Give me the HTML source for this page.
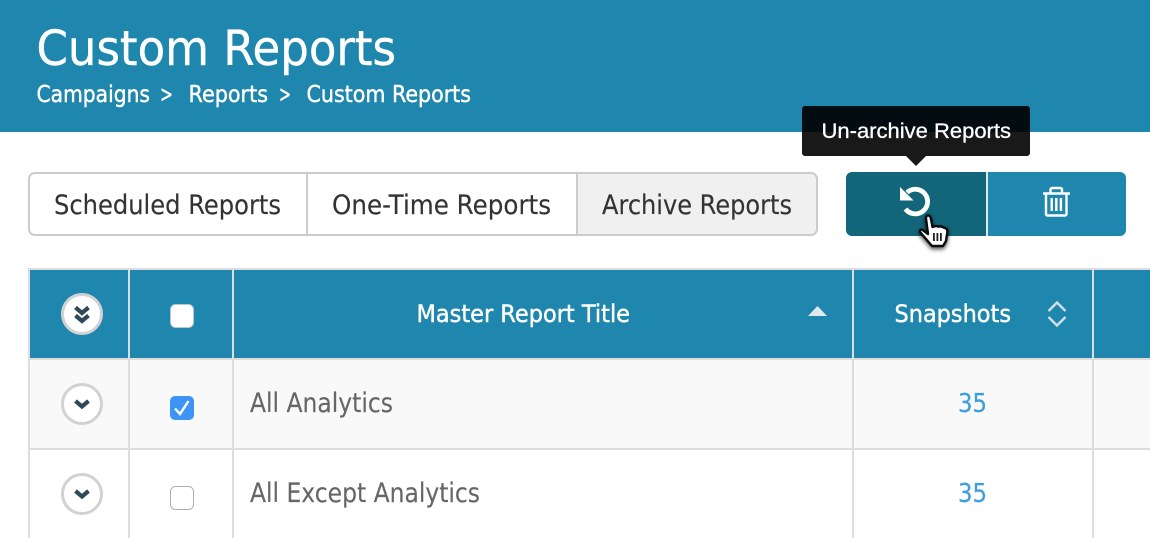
<!DOCTYPE html>
<html><head><meta charset="utf-8"><title>Custom Reports</title>
<style>
html,body{margin:0;padding:0;background:#fff;width:1150px;height:538px;overflow:hidden}
svg{display:block}
text{font-family:"DejaVu Sans","Liberation Sans",sans-serif}
</style></head><body>
<svg width="1150" height="538" viewBox="0 0 1150 538" xmlns="http://www.w3.org/2000/svg">
<defs>
<g id="chev"><path d="M-6.500 -3 L0 2.500 L6.500 -3" fill="none" stroke="#2f4a56" stroke-width="4.200"/></g>
</defs>
<rect width="1150" height="538" fill="#fff"/>
<rect width="1150" height="132" fill="#1f87ae"/>
<text x="36.500" y="65" font-size="48" fill="#fff" stroke="#fff" stroke-width=".4" textLength="359.500" lengthAdjust="spacingAndGlyphs">Custom Reports</text>
<g font-size="23" fill="#fff" stroke="#fff" stroke-width=".45">
<text x="36.500" y="102" textLength="113.500" lengthAdjust="spacingAndGlyphs">Campaigns</text>
<text x="160" y="102" textLength="13" lengthAdjust="spacingAndGlyphs">&gt;</text>
<text x="188.500" y="102" textLength="79.500" lengthAdjust="spacingAndGlyphs">Reports</text>
<text x="279" y="102" textLength="12" lengthAdjust="spacingAndGlyphs">&gt;</text>
<text x="306.500" y="102" textLength="164.500" lengthAdjust="spacingAndGlyphs">Custom Reports</text>
</g>

<!-- tabs -->
<path d="M577 173H811a6 6 0 0 1 6 6V229a6 6 0 0 1 -6 6H577Z" fill="#f0f0f0"/>
<rect x="29" y="173" width="788" height="62" rx="6" fill="none" stroke="#cccccc" stroke-width="2"/>
<rect x="306" y="173" width="2" height="62" fill="#cccccc"/>
<rect x="576" y="173" width="2" height="62" fill="#cccccc"/>
<g font-size="27" fill="#333" stroke="#333" stroke-width=".15">
<text x="54" y="214" textLength="227" lengthAdjust="spacingAndGlyphs">Scheduled Reports</text>
<text x="332" y="214" textLength="219" lengthAdjust="spacingAndGlyphs">One-Time Reports</text>
<text x="602" y="214" textLength="190" lengthAdjust="spacingAndGlyphs">Archive Reports</text>
</g>

<!-- action buttons -->
<path d="M986 172V236H852a6 6 0 0 1 -6 -6V178a6 6 0 0 1 6 -6Z" fill="#13667a"/>
<rect x="986" y="172" width="2" height="64" fill="#dbe7ec"/>
<path d="M988 172H1120a6 6 0 0 1 6 6V230a6 6 0 0 1 -6 6H988Z" fill="#1f87ae"/>

<!-- undo icon -->
<path d="M907 192.500 A12.300 12.300 0 1 1 905.500 209" fill="none" stroke="#fff" stroke-width="4.800"/>
<path d="M900 187 V200.500 H913.500 Z" fill="#fff"/>

<!-- trash icon -->
<g fill="none" stroke="#fff" stroke-width="2.400">
<path d="M1043 193.500H1070"/>
<path d="M1046 193.500V214a1.500 1.500 0 0 0 1.500 1.500H1065a1.500 1.500 0 0 0 1.500 -1.500V193.500"/>
<path d="M1050.500 193.500V189.500a1.500 1.500 0 0 1 1.500 -1.500H1060.500a1.500 1.500 0 0 1 1.500 1.500V193.500"/>
</g>
<g fill="#fff"><rect x="1050.500" y="198" width="2.400" height="13"/><rect x="1055.100" y="198" width="2.400" height="13"/><rect x="1059.700" y="198" width="2.400" height="13"/></g>

<!-- cursor -->
<path d="M926 218.500 Q926 215 928.500 215.500 Q930.500 216 931 219 L932.500 227 Q936 225.500 938 226.500 Q942 226 943.500 227.500 Q947 228 947.500 231 L946 241 L943 246 H932 L926 239 L920 232 Q919.500 229.500 922 229.500 L928 234 Z" fill="#fff" stroke="#0b0b0b" stroke-width="2.400" stroke-linejoin="round" style="filter:drop-shadow(0 2px 2px rgba(0,0,0,.7))"/>
<g fill="#222"><rect x="933" y="233" width="1.800" height="8"/><rect x="936.500" y="233" width="1.800" height="8"/><rect x="940" y="233" width="1.800" height="8"/></g>

<!-- tooltip -->
<path d="M805 106H1027a3 3 0 0 1 3 3V153a3 3 0 0 1 -3 3H926L916 166L906 156H805a3 3 0 0 1 -3 -3V109a3 3 0 0 1 3 -3Z" fill="#000" fill-opacity=".9"/>
<text x="821.500" y="138" font-size="21" fill="#fff" stroke="#fff" stroke-width=".3" style="font-family:'Liberation Sans',sans-serif" textLength="189.500" lengthAdjust="spacingAndGlyphs">Un-archive Reports</text>

<!-- table -->
<rect x="28" y="268" width="1122" height="270" fill="#ddd"/>
<rect x="30" y="270" width="98" height="88" fill="#1f87ae"/>
<rect x="130" y="270" width="102" height="88" fill="#1f87ae"/>
<rect x="234" y="270" width="618" height="88" fill="#1f87ae"/>
<rect x="854" y="270" width="238" height="88" fill="#1f87ae"/>
<rect x="1094" y="270" width="56" height="88" fill="#1f87ae"/>
<g fill="#f9f9f9">
<rect x="30" y="360" width="98" height="88"/><rect x="130" y="360" width="102" height="88"/><rect x="234" y="360" width="618" height="88"/><rect x="854" y="360" width="238" height="88"/><rect x="1094" y="360" width="56" height="88"/>
</g>
<g fill="#fff">
<rect x="30" y="450" width="98" height="88"/><rect x="130" y="450" width="102" height="88"/><rect x="234" y="450" width="618" height="88"/><rect x="854" y="450" width="238" height="88"/><rect x="1094" y="450" width="56" height="88"/>
</g>

<!-- header text -->
<g font-size="24" fill="#fff" stroke="#fff" stroke-width=".45">
<text x="416.500" y="322" textLength="213.500" lengthAdjust="spacingAndGlyphs">Master Report Title</text>
<text x="894.500" y="322" textLength="116.500" lengthAdjust="spacingAndGlyphs">Snapshots</text>
</g>
<path d="M817.500 306 L827 316 H808 Z" fill="#dfe9ed"/>
<g fill="none" stroke="#d0dfe5" stroke-width="2.400"><path d="M1048.500 311 L1057 302.500 L1065.500 311"/><path d="M1048.500 317 L1057 325.500 L1065.500 317"/></g>

<!-- expand circles -->
<g fill="#fff" stroke="#d2d2d2" stroke-width="3">
<circle cx="82" cy="314" r="19.500"/><circle cx="82" cy="404" r="19.500"/><circle cx="82" cy="494" r="19.500"/>
</g>
<use href="#chev" x="82" y="310.500"/><use href="#chev" x="82" y="318.500"/>
<use href="#chev" x="82" y="404"/><use href="#chev" x="82" y="494"/>

<!-- checkboxes -->
<rect x="170.500" y="304.500" width="23" height="23" rx="5" fill="#fff" stroke="#b9c5ca"/>
<rect x="170" y="396" width="24" height="24" rx="5" fill="#3d94f6"/>
<path d="M175 408.500 L180 414 L188.500 401" fill="none" stroke="#fff" stroke-width="2.400"/>
<rect x="170.500" y="486.500" width="23" height="23" rx="5" fill="#fff" stroke="#aeaeae"/>

<!-- rows -->
<g font-size="27" fill="#666" stroke="#666" stroke-width=".15">
<text x="250" y="412" textLength="143" lengthAdjust="spacingAndGlyphs">All Analytics</text>
<text x="250" y="502" textLength="230" lengthAdjust="spacingAndGlyphs">All Except Analytics</text>
</g>
<g font-size="26" fill="#3f9fdc" stroke="#3f9fdc" stroke-width=".25">
<text x="958" y="412" textLength="29" lengthAdjust="spacingAndGlyphs">35</text>
<text x="958" y="502" textLength="29" lengthAdjust="spacingAndGlyphs">35</text>
</g>
</svg>
</body></html>
